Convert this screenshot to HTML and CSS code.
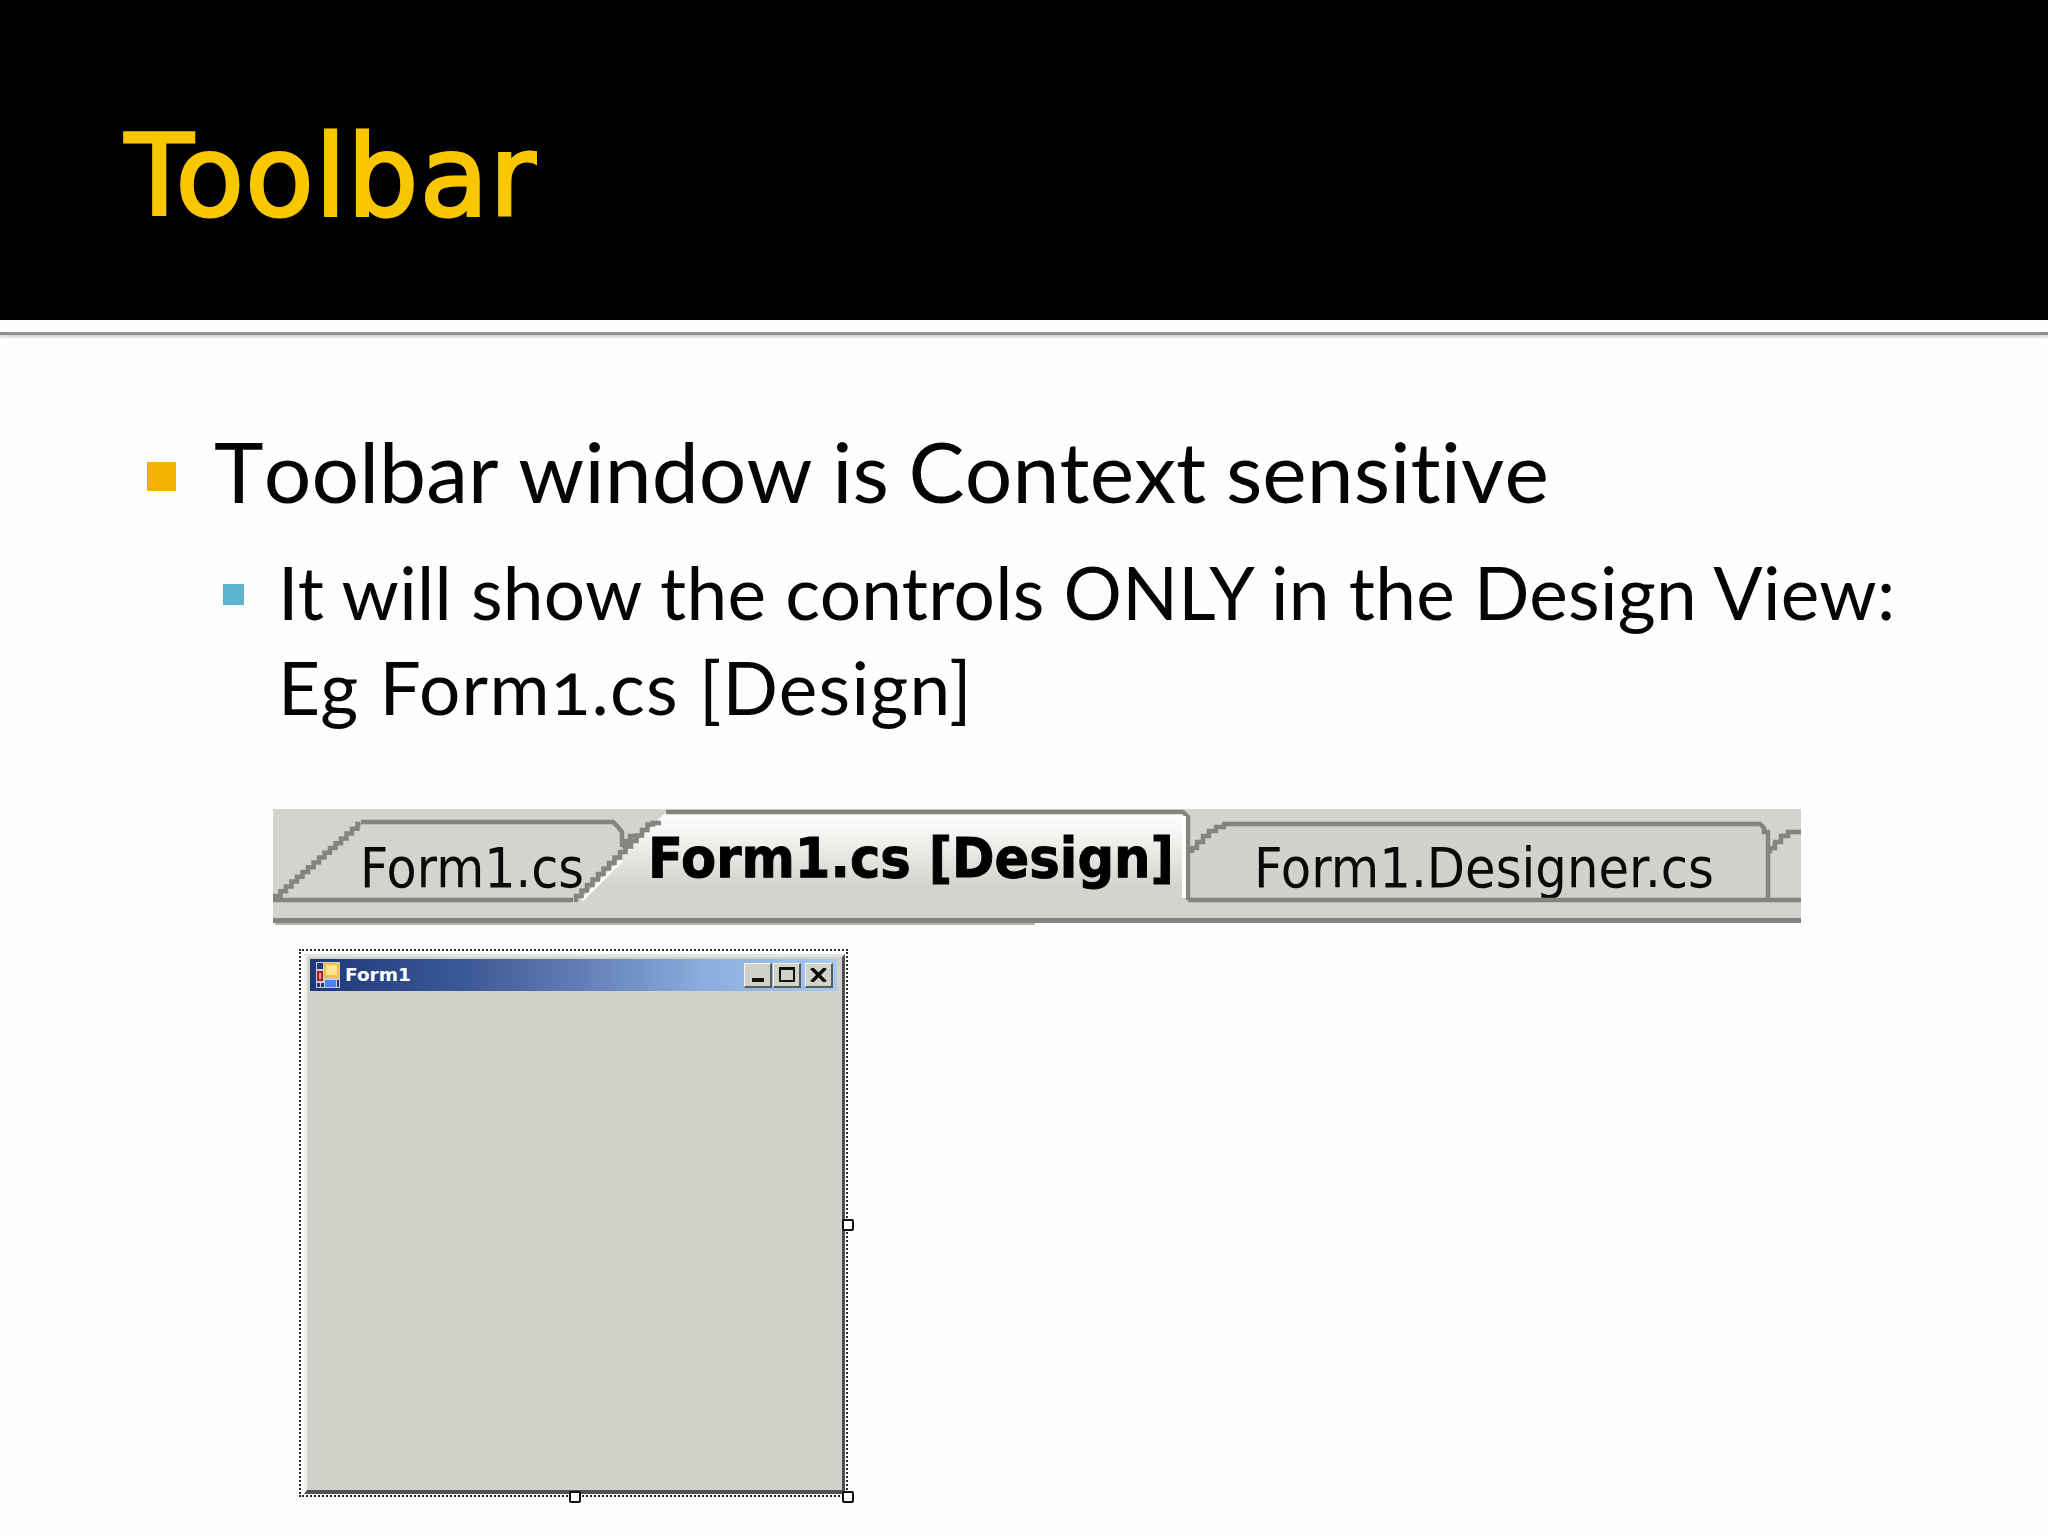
FILE: index.html
```html
<!DOCTYPE html>
<html lang="en">
<head>
<meta charset="utf-8">
<title>Toolbar</title>
<link rel="stylesheet" href="styles.css">
</head>
<body>
<header class="banner"><h1 class="title">Toolbar</h1></header>
<div class="rule"></div>
<main class="content">
  <div class="point">
    <span class="bullet bullet-main"></span>
    <p class="point-text">Toolbar window is Context sensitive</p>
  </div>
  <div class="subpoint">
    <span class="bullet bullet-sub"></span>
    <p class="subpoint-text"><span class="line">It will show the controls ONLY in the Design View:</span><span class="line line-wide">Eg Form1.cs [Design]</span></p>
  </div>
  <svg class="tabstrip" viewBox="273 809 1528 116" width="1528" height="116" aria-label="Editor tabs">
    <defs>
      <linearGradient id="activeTab" x1="0" y1="0" x2="0" y2="1">
        <stop offset="0" stop-color="#ffffff"/>
        <stop offset="0.2" stop-color="#f6f6f4"/>
        <stop offset="0.8" stop-color="#d4d3cd"/>
        <stop offset="1" stop-color="#d4d3cd"/>
      </linearGradient>
    </defs>
    <rect x="273" y="809" width="1528" height="109" fill="#d4d3cd"/>
    <path d="M1187 900V853L1233 822H1760L1768 830V900Z" fill="#d2d1cb"/>
    <path d="M573 905L666 812H1184L1189 818V905Z" fill="url(#activeTab)"/>
    <text class="tab-text" x="360" y="887" textLength="224" lengthAdjust="spacingAndGlyphs">Form1.cs</text>
    <text class="tab-text tab-text-active" x="648" y="877" textLength="526" lengthAdjust="spacingAndGlyphs">Form1.cs [Design]</text>
    <text class="tab-text" x="1254" y="887" textLength="460" lengthAdjust="spacingAndGlyphs">Form1.Designer.cs</text>
    <path class="tab-line" d="M273 900h300M275 900v-4h5.5v-4.8h5.5v-4.8h5.5v-4.8h5.5v-4.8h5.5v-4.8h5.5v-4.8h5.5v-4.8h5.5v-4.8h5.5v-4.8h5.5v-4.8h5.5v-4.8h5.5v-4.8h5.5v-4.8h5.5v-4.8h5.5v-4.8h3M361 822H613l5 5l4 5v15"/>
    <path class="tab-white" d="M582 900l5 -5l5 -5l6 -6l6 -6l6 -6l6 -6l6 -6"/>
    <path class="tab-line" d="M576 902v-6h5.5v-5.5h5.5v-5.5h5.5v-5.5h5.5v-5.5h5.5v-5.5h5.5v-5.5h5.5v-5.5h5.5v-5.5h5.5v-5.5h5.5v-5.5h5.5v-5.5h5.5v-5.5h5.5v-5.5h5.5v-1.5h8M622 846h4v-5h4v-5h5"/>
    <path class="tab-line" d="M666 812H1183l5 5V900"/>
    <path class="tab-white-line" d="M1184 816V898"/>
    <path class="tab-line" d="M1188 900H1801M1192 853v-5h5v-6h6v-6h6v-5h7v-4h8v-3h9H1760l4 4v4h4V900M1770 853v-5h5v-6h6v-6h7v-4h13"/>
    <rect class="tab-band" x="273" y="918" width="1528" height="5"/>
    <rect class="tab-band-light" x="275" y="923" width="760" height="2"/>
  </svg>
  <section class="designer">
    <div class="window">
      <div class="titlebar">
        <svg class="form-icon" viewBox="0 0 24 26" width="24" height="26" aria-hidden="true">
          <rect width="24" height="26" fill="#c9ccd4"/>
          <rect x="1" y="1" width="6" height="6" fill="#23397c"/>
          <rect x="8" y="1" width="15" height="15" fill="#f4bf3c"/>
          <rect x="10" y="3" width="11" height="10" fill="#fde58c"/>
          <rect x="1" y="9" width="6" height="10" fill="#b3161c"/>
          <rect x="3" y="11" width="2" height="6" fill="#f7a4a0"/>
          <rect x="9" y="18" width="11" height="7" fill="#4a86dc"/>
          <rect x="1" y="21" width="3" height="4" fill="#23397c"/>
          <rect x="5" y="21" width="3" height="4" fill="#23397c"/>
          <rect x="21" y="18" width="2" height="7" fill="#23397c"/>
        </svg>
        <span class="form-name">Form1</span>
        <div class="caption-buttons">
          <span class="caption-btn caption-min"><i class="glyph-min"></i></span>
          <span class="caption-btn caption-max"><i class="glyph-max"></i></span>
          <span class="caption-btn caption-close">
            <svg viewBox="0 0 14 12" width="17" height="14" aria-hidden="true"><path d="M1 0L13 12M13 0L1 12" stroke="#0c0c0c" stroke-width="3" fill="none"/></svg>
          </span>
        </div>
      </div>
    </div>
    <span class="handle handle-right"></span>
    <span class="handle handle-bottom"></span>
    <span class="handle handle-corner"></span>
  </section>
</main>
</body>
</html>
```
FILE: styles.css
```css
html, body {
  margin: 0;
  padding: 0;
  background: #fefefe;
}
body {
  width: 2048px;
  height: 1536px;
  overflow: hidden;
  font-family: "Lato", "Open Sans", sans-serif;
  color: #050505;
}
.banner {
  height: 320px;
  background: #000;
  padding-left: 125px;
  box-sizing: border-box;
}
.title {
  margin: 0;
  padding-top: 96px;
  font-family: "DejaVu Sans", sans-serif;
  font-weight: 400;
  font-size: 112px;
  line-height: 160px;
  color: #f9c700;
  -webkit-text-stroke: 3px #f9c700;
  letter-spacing: 1.2px;
}
.rule {
  height: 3px;
  margin-top: 12px;
  background: #8f8f8f;
  box-shadow: 0 2px 3px #c8c8c8;
}
.content {
  display: flow-root;
}
.point, .subpoint {
  display: flex;
  align-items: flex-start;
}
.point {
  margin-top: 86px;
  padding-left: 147px;
}
.subpoint {
  margin-top: 24px;
  padding-left: 223px;
}
.bullet {
  flex: none;
  display: block;
}
.bullet-main {
  width: 29px;
  height: 29px;
  background: #f3b200;
  margin: 41px 38px 0 0;
}
.bullet-sub {
  width: 21px;
  height: 21px;
  background: #5eb5cf;
  margin: 39px 34px 0 0;
}
.point-text, .subpoint-text {
  margin: 0;
  font-feature-settings: "onum" 1, "liga" 0;
  font-variant-ligatures: none;
  white-space: nowrap;
}
.point-text {
  font-size: 84px;
  font-kerning: none;
  letter-spacing: 0.1px;
  word-spacing: -2px;
  line-height: 100px;
}
.subpoint-text {
  font-size: 73px;
  letter-spacing: 0.27px;
  line-height: 95px;
}
.line {
  display: block;
}
.line-wide {
  letter-spacing: 1.27px;
}
.tabstrip {
  display: block;
  margin: 74px 0 0 273px;
}
.tab-text {
  font-family: "DejaVu Sans", sans-serif;
  font-size: 56px;
  fill: #0a0a0a;
}
.tab-text-active {
  font-weight: 700;
  fill: #000;
  stroke: #000;
  stroke-width: 1;
}
.tab-line {
  fill: none;
  stroke: #858580;
  stroke-width: 4.5;
}
.tab-white {
  fill: none;
  stroke: #ffffff;
  stroke-width: 3;
}
.tab-white-line {
  fill: none;
  stroke: #ffffff;
  stroke-width: 4;
}
.tab-band {
  fill: #858580;
}
.tab-band-light {
  fill: #b4b4b0;
}
.designer {
  position: relative;
  box-sizing: border-box;
  width: 549px;
  height: 548px;
  margin: 24px 0 0 299px;
  border: 2px dotted #2a2a2a;
  padding: 3px 1px 1px 3px;
}
.window {
  box-sizing: border-box;
  height: 100%;
  background: #d2d1ca;
  border-top: 3px solid #e4e4e0;
  border-left: 3px solid #f2f2f0;
  border-right: 3px solid #505050;
  border-bottom: 4px solid #505050;
  padding: 2px 5px 0 3px;
}
.titlebar {
  display: flex;
  align-items: center;
  height: 32px;
  padding: 0 4px 0 6px;
  background: linear-gradient(90deg, #1c3878 0%, #3d5a98 30%, #5f7bb4 50%, #8aaedd 75%, #a6caf0 100%);
}
.form-icon {
  flex: none;
}
.form-name {
  margin-left: 5px;
  font-family: "DejaVu Sans", sans-serif;
  font-weight: 700;
  font-size: 18.5px;
  line-height: 24px;
  color: #fff;
}
.caption-buttons {
  display: flex;
  margin-left: auto;
}
.caption-btn {
  box-sizing: border-box;
  display: flex;
  align-items: center;
  justify-content: center;
  width: 28px;
  height: 25px;
  background: #d2d1ca;
  border-top: 1px solid #f4f4f2;
  border-left: 1px solid #f4f4f2;
  border-right: 2px solid #5b5b58;
  border-bottom: 2px solid #5b5b58;
}
.caption-max {
  margin-left: 1px;
}
.caption-close {
  margin-left: 4px;
}
.glyph-min {
  display: block;
  width: 12px;
  height: 4px;
  margin-top: 10px;
  background: #111;
}
.glyph-max {
  display: block;
  box-sizing: border-box;
  width: 16px;
  height: 15px;
  border: 2px solid #111;
  border-top-width: 3px;
}
.handle {
  position: absolute;
  box-sizing: border-box;
  width: 12px;
  height: 12px;
  background: #fff;
  border: 2px solid #111;
  border-radius: 2px;
}
.handle-right {
  right: -8px;
  top: 268px;
}
.handle-bottom {
  left: 268px;
  bottom: -8px;
}
.handle-corner {
  right: -8px;
  bottom: -8px;
}
```
